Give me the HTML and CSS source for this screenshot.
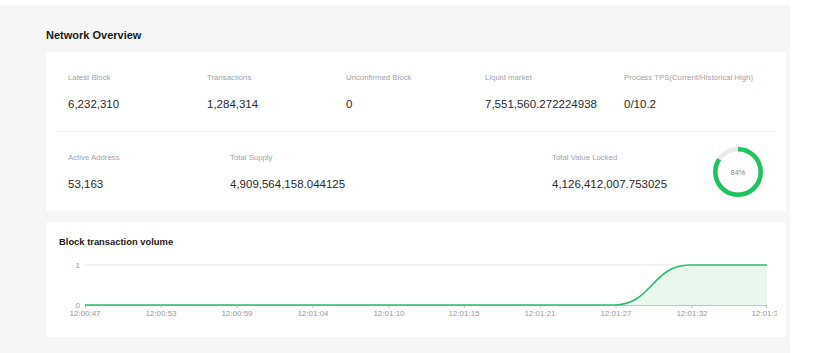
FILE: index.html
```html
<!DOCTYPE html>
<html>
<head>
<meta charset="utf-8">
<link rel="stylesheet" href="styles.css">
</head>
<body>
<div class="page">
  <div class="panel">
    <h2 class="section-title">Network Overview</h2>
    <div class="card stats">
      <div class="row row1">
        <div class="stat"><div class="label">Latest Block</div><div class="value">6,232,310</div></div>
        <div class="stat"><div class="label">Transactions</div><div class="value">1,284,314</div></div>
        <div class="stat"><div class="label">Unconfirmed Block</div><div class="value">0</div></div>
        <div class="stat"><div class="label">Liquid market</div><div class="value">7,551,560.272224938</div></div>
        <div class="stat"><div class="label">Process TPS(Current/Historical High)</div><div class="value">0/10.2</div></div>
      </div>
      <div class="divider"></div>
      <div class="row row2">
        <div class="stat"><div class="label">Active Address</div><div class="value">53,163</div></div>
        <div class="stat"><div class="label">Total Supply</div><div class="value">4,909,564,158.044125</div></div>
        <div class="stat"><div class="label">Total Value Locked</div><div class="value">4,126,412,007.753025</div></div>
        <div class="donut">
          <svg width="50" height="50" viewBox="0 0 50 50">
            <circle cx="25" cy="25" r="22.7" fill="none" stroke="#e9e9ee" stroke-width="4.5"/>
            <circle cx="25" cy="25" r="22.7" fill="none" stroke="#1ec45e" stroke-width="4.5"
              stroke-dasharray="119.8 142.6" transform="rotate(-90 25 25)"/>
            <text x="25" y="27.6" text-anchor="middle" class="donut-text">84%</text>
          </svg>
        </div>
      </div>
    </div>
    <div class="card chart-card">
      <div class="chart-title">Block transaction volume</div>
      <svg class="chart" width="731" height="90" viewBox="0 0 731 90">
        <line x1="39" y1="18" x2="721" y2="18" stroke="#e6e6e6" stroke-width="1"/>
        <text x="34" y="21" text-anchor="end" class="axis-text">1</text>
        <text x="34" y="61" text-anchor="end" class="axis-text">0</text>
        <path d="M568,58 C606,58 606,18 644,18 L721,18 L721,58 Z" fill="#e8f8ec"/>
        <line x1="39" y1="58.5" x2="721" y2="58.5" stroke="#c4c4c4" stroke-width="1"/>
        <g stroke="#c4c4c4" stroke-width="1">
          <line x1="39.5" y1="58" x2="39.5" y2="61"/>
          <line x1="115.3" y1="58" x2="115.3" y2="61"/>
          <line x1="191.1" y1="58" x2="191.1" y2="61"/>
          <line x1="266.8" y1="58" x2="266.8" y2="61"/>
          <line x1="342.6" y1="58" x2="342.6" y2="61"/>
          <line x1="418.4" y1="58" x2="418.4" y2="61"/>
          <line x1="494.2" y1="58" x2="494.2" y2="61"/>
          <line x1="570" y1="58" x2="570" y2="61"/>
          <line x1="645.7" y1="58" x2="645.7" y2="61"/>
          <line x1="720.5" y1="58" x2="720.5" y2="61"/>
        </g>
        <path d="M39,58 L568,58 C606,58 606,18 644,18 L721,18" fill="none" stroke="#2dbd6e" stroke-width="1.6"/>
        <g class="axis-text" text-anchor="middle">
          <text x="39" y="69">12:00:47</text>
          <text x="115" y="69">12:00:53</text>
          <text x="191" y="69">12:00:59</text>
          <text x="267" y="69">12:01:04</text>
          <text x="343" y="69">12:01:10</text>
          <text x="418" y="69">12:01:15</text>
          <text x="494" y="69">12:01:21</text>
          <text x="570" y="69">12:01:27</text>
          <text x="646" y="69">12:01:32</text>
          <text x="721" y="69">12:01:38</text>
        </g>
      </svg>
    </div>
  </div>
</div>
</body>
</html>
```

FILE: styles.css
```css
* { box-sizing: border-box; }
html, body { margin: 0; padding: 0; }
body {
  background: #fafafa;
  font-family: "Liberation Sans", Arial, Helvetica, sans-serif;
  color: #222;
}
.page {
  padding-top: 5px;
  background: #ffffff;
  height: 353px;
}
.panel {
  width: 790px;
  height: 348px;
  background: #f6f6f6;
  padding: 24px 4px 0 46px;
}
.section-title {
  margin: 0 0 10px 0;
  font-size: 11px;
  line-height: 13px;
  font-weight: bold;
  color: #1a1a1a;
}
.card {
  background: #ffffff;
  width: 740px;
  border-radius: 2px;
}
.stats {
  padding: 0 10px;
  height: 159px;
}
.row { display: grid; }
.row1 {
  grid-template-columns: repeat(5, 139px);
  padding: 21px 12px 20px;
}
.row2 {
  grid-template-columns: 162px 322px 1fr auto;
  align-items: center;
  padding: 15px 13px 0 12px;
}
.divider {
  height: 1px;
  background: #f0f0f0;
}
.label {
  font-size: 7.8px;
  line-height: 10px;
  color: #a3a3a8;
  white-space: nowrap;
}
.value {
  margin-top: 14px;
  font-size: 11.5px;
  line-height: 14px;
  color: #2a2a2a;
  white-space: nowrap;
}
.donut { width: 50px; height: 50px; }
.donut svg { display: block; }
.donut-text {
  font-size: 7.5px;
  fill: #888;
  font-family: "Liberation Sans", Arial, sans-serif;
}
.chart-card {
  margin-top: 11px;
  height: 115px;
  padding-top: 14px;
}
.chart-title {
  padding-left: 13px;
  font-size: 9.4px;
  line-height: 11px;
  font-weight: bold;
  color: #1a1a1a;
}
.chart { display: block; overflow: hidden; }
.axis-text {
  font-size: 8px;
  fill: #9a9a9a;
  font-family: "Liberation Sans", Arial, sans-serif;
}
```
